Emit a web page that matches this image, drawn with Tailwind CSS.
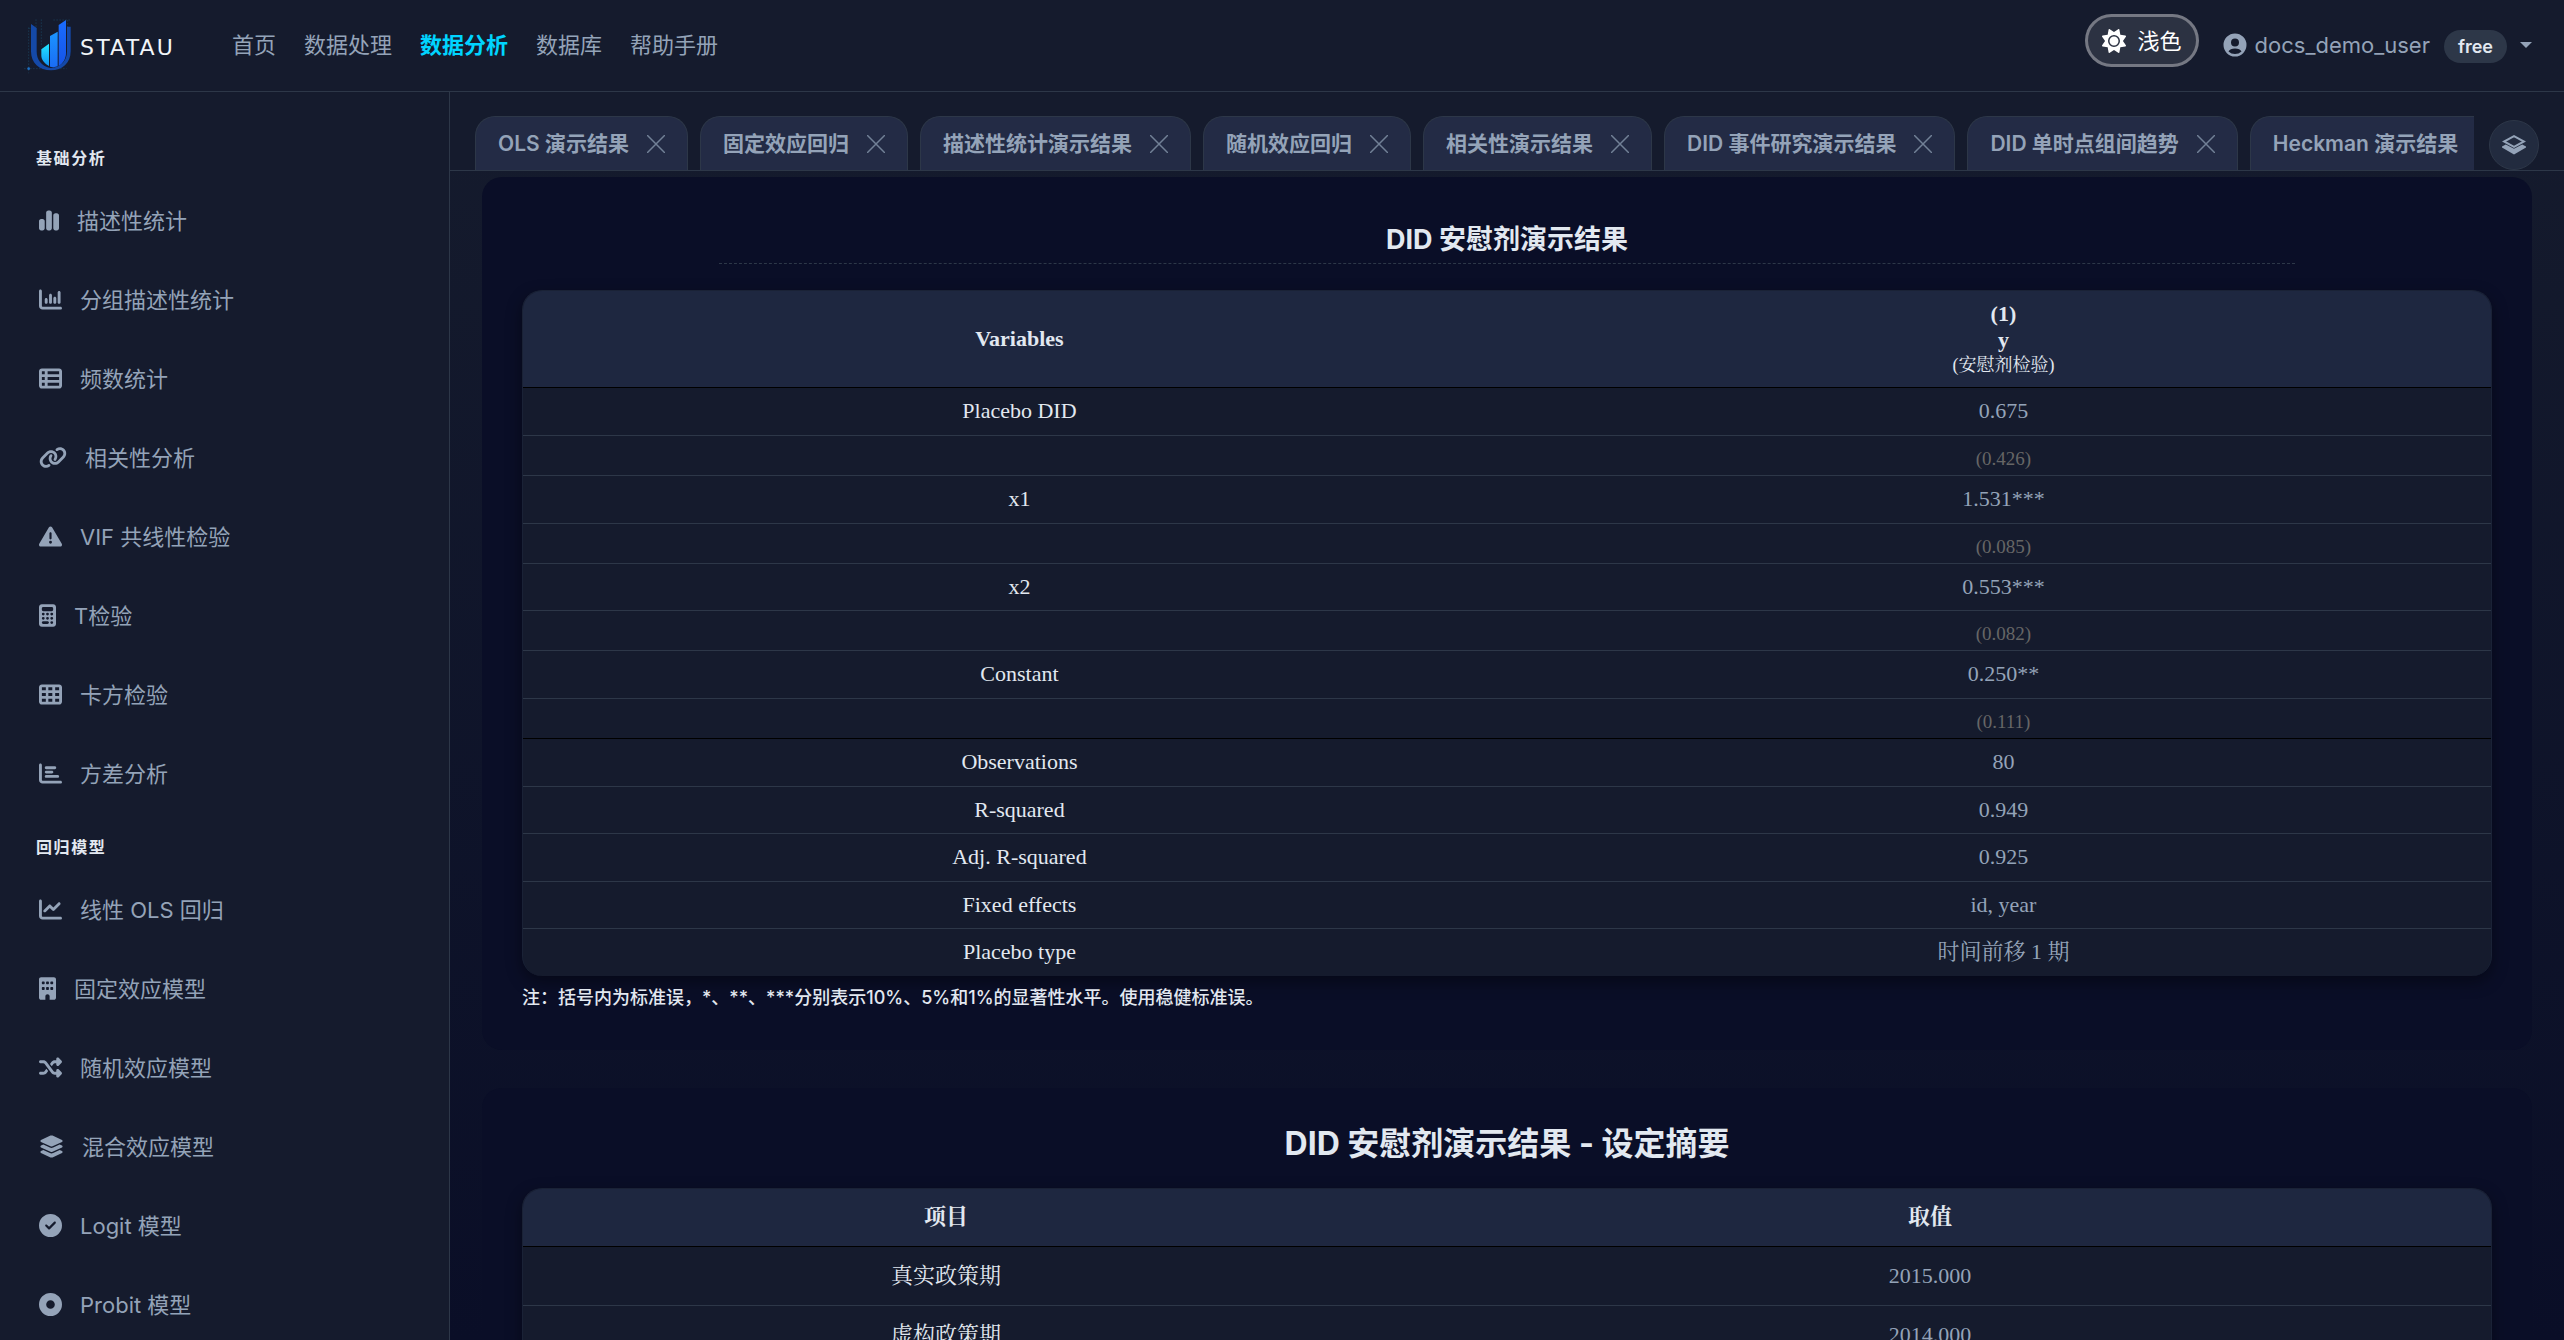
<!DOCTYPE html>
<html lang="zh-CN">
<head>
  <meta charset="UTF-8" />
  <meta name="viewport" content="width=device-width, initial-scale=1.0" />
  <title>STATAU - 数据分析</title>
  <script src="https://cdn.jsdelivr.net/npm/@tailwindcss/browser@4"></script>
</head>
<body class="h-screen overflow-hidden flex flex-col bg-[#0a0e27] text-[#94a3b8] font-[Inter,'Noto_Sans_CJK_SC',sans-serif] text-[22px] leading-[32px]">

  <!-- Header -->
  <header class="h-[92px] shrink-0 flex items-center justify-between bg-[#151b2d] border-b border-[#2d3748] pl-6 pr-8">
    <div class="flex items-center">
      <a href="#" class="flex items-center gap-2 w-[208px]" aria-label="STATAU">
        <svg class="w-12 h-14 shrink-0" viewBox="12 24 144 168" fill="none">
          <defs>
            <linearGradient id="bar1" x1="0" y1="0" x2="0" y2="1"><stop offset="0" stop-color="#22e6ff" /><stop offset="1" stop-color="#1293f5" /></linearGradient>
            <linearGradient id="bar2" x1="0" y1="0" x2="0" y2="1"><stop offset="0" stop-color="#1b95ff" /><stop offset="1" stop-color="#1a6cf5" /></linearGradient>
            <linearGradient id="bar3" x1="0" y1="0" x2="0" y2="1"><stop offset="0" stop-color="#1a6dff" /><stop offset="1" stop-color="#1554e6" /></linearGradient>
          </defs>
          <path d="M26 52V190M12 176H140M48 28V60M64 28V110M26 55H50M100 30H150M143 30V60" stroke="#1f5a7c" stroke-opacity=".6" stroke-width="2" stroke-dasharray="5 4" />
          <path d="M33 42 50 54V124C50 150 64 168 90 174C124 174 141 152 141 124V50H152V124C152 160 126 181 93 181C58 181 33 160 33 124Z" fill="#1449a8" />
          <path d="M64 118 87 101V168C73 161 65 150 64 138Z" fill="url(#bar1)" />
          <path d="M90 78 113 65V169C106 172 97 172 90 170Z" fill="url(#bar2)" />
          <path d="M116 45 138 30V128C138 146 129 160 116 168Z" fill="url(#bar3)" />
          <circle cx="26" cy="176" r="4" fill="#1d6fc4" />
        </svg>
        <span class="font-['DejaVu_Sans',sans-serif] text-[22px] leading-[24px] tracking-widest text-slate-100 mt-1">STATAU</span>
      </a>
      <nav class="flex items-center gap-7 pb-[2px]">
        <a href="#">首页</a>
        <a href="#">数据处理</a>
        <a href="#" class="font-semibold text-[#00d4ff]" aria-current="page">数据分析</a>
        <a href="#">数据库</a>
        <a href="#">帮助手册</a>
      </nav>
    </div>
    <div class="flex items-center">
      <button type="button" class="flex items-center gap-3 h-[53px] px-[14px] mb-[10px] rounded-full border-3 border-white/35 bg-white/10 text-white">
        <svg class="size-6" viewBox="0 0 512 512" fill="currentColor"><path d="M361.5 1.2c5 2.1 8.6 6.6 9.6 11.9L391 121l107.9 19.8c5.3 1 9.8 4.6 11.9 9.6s1.5 10.7-1.6 15.2L446.9 256l62.3 90.3c3.1 4.5 3.7 10.2 1.6 15.2s-6.6 8.6-11.9 9.6L391 391 371.1 498.9c-1 5.3-4.6 9.8-9.6 11.9s-10.7 1.5-15.2-1.6L256 446.9l-90.3 62.3c-4.5 3.1-10.2 3.7-15.2 1.6s-8.6-6.6-9.6-11.9L121 391 13.1 371.1c-5.3-1-9.8-4.6-11.9-9.6s-1.5-10.7 1.6-15.2L65.1 256 2.8 165.7c-3.1-4.5-3.7-10.2-1.6-15.2s6.6-8.6 11.9-9.6L121 121 140.9 13.1c1-5.3 4.6-9.8 9.6-11.9s10.7-1.5 15.2 1.6L256 65.1 346.3 2.8c4.5-3.1 10.2-3.7 15.2-1.6zM160 256a96 96 0 1 1 192 0 96 96 0 1 1 -192 0zm224 0a128 128 0 1 0 -256 0 128 128 0 1 0 256 0z" /></svg>
        浅色
      </button>
      <button type="button" class="flex items-center ml-6 pb-[2px]">
        <svg class="size-6 mr-2" viewBox="0 0 24 24" fill="currentColor" fill-rule="evenodd"><path d="M12 .5a11.500 11.500 0 1 0 0 23 11.500 11.500 0 0 0 0-23zM12 5.500a4 4 0 1 1 0 8 4 4 0 0 1 0-8zM12 15.500c3.200 0 5.600 1.200 6.500 3a9.500 9.500 0 0 1-13 0c.9-1.800 3.300-3 6.500-3z" /></svg>
        <span>docs_demo_user</span>
        <span class="flex items-center h-[33px] px-[14px] ml-[14px] mt-1 rounded-full bg-[#2d3748] text-[18px] font-semibold text-slate-200">free</span>
        <svg class="w-3 h-[6px] ml-[13px]" viewBox="0 0 12 6" fill="currentColor"><path d="M0 0h12L6 6z" /></svg>
      </button>
    </div>
  </header>

  <div class="flex flex-1 min-h-0">

    <!-- Sidebar -->
    <aside class="w-[450px] shrink-0 overflow-hidden bg-[#151b2d] border-r border-[#2d3748]">
      <h2 class="pl-9 pt-[54px] mb-[11px] text-[16px] leading-[24px] font-bold tracking-widest text-slate-200">基础分析</h2>
      <ul class="pl-[39px]">
        <li><a href="#" class="flex items-center gap-[18px] h-[79px]">
          <svg class="w-5 h-[23px]" viewBox="0 0 448 512" fill="currentColor"><path d="M160 80c0-26.500 21.500-48 48-48h32c26.500 0 48 21.500 48 48V432c0 26.500-21.500 48-48 48H208c-26.500 0-48-21.500-48-48V80zM0 272c0-26.500 21.500-48 48-48H80c26.500 0 48 21.500 48 48V432c0 26.500-21.500 48-48 48H48c-26.500 0-48-21.500-48-48V272zM368 96h32c26.500 0 48 21.500 48 48V432c0 26.500-21.500 48-48 48H368c-26.500 0-48-21.500-48-48V144c0-26.500 21.500-48 48-48z" /></svg>
          描述性统计
        </a></li>
        <li><a href="#" class="flex items-center gap-[18px] h-[79px]">
          <svg class="size-[23px]" viewBox="0 0 512 512" fill="currentColor"><path d="M32 32c17.700 0 32 14.300 32 32V400c0 8.800 7.200 16 16 16H480c17.700 0 32 14.300 32 32s-14.300 32-32 32H80c-44.200 0-80-35.800-80-80V64C0 46.300 14.300 32 32 32zM160 224c17.700 0 32 14.300 32 32v64c0 17.700-14.300 32-32 32s-32-14.300-32-32V256c0-17.700 14.300-32 32-32zm128-64V320c0 17.700-14.300 32-32 32s-32-14.300-32-32V160c0-17.700 14.300-32 32-32s32 14.300 32 32zm64 32c17.700 0 32 14.300 32 32v96c0 17.700-14.300 32-32 32s-32-14.300-32-32V224c0-17.700 14.300-32 32-32zM480 96V320c0 17.700-14.300 32-32 32s-32-14.300-32-32V96c0-17.700 14.300-32 32-32s32 14.300 32 32z" /></svg>
          分组描述性统计
        </a></li>
        <li><a href="#" class="flex items-center gap-[18px] h-[79px]">
          <svg class="size-[23px]" viewBox="0 0 512 512" fill="currentColor" fill-rule="evenodd"><path d="M0 96C0 60.700 28.700 32 64 32H448c35.300 0 64 28.700 64 64V416c0 35.300-28.700 64-64 64H64c-35.300 0-64-28.700-64-64V96zm64 0v64h64V96H64zm384 0H192v64H448V96zM64 224v64h64V224H64zm384 0H192v64H448V224zM64 352v64h64V352H64zm384 0H192v64H448V352z" /></svg>
          频数统计
        </a></li>
        <li><a href="#" class="flex items-center gap-[18px] h-[79px]">
          <svg class="w-7 h-[23px]" viewBox="0 0 640 512" fill="currentColor"><path d="M579.8 267.7c56.5-56.5 56.5-148 0-204.5c-50-50-128.8-56.5-186.3-15.4l-1.6 1.1c-14.4 10.3-17.7 30.3-7.4 44.6s30.3 17.7 44.6 7.4l1.6-1.1c32.1-22.9 76-19.3 103.8 8.6c31.5 31.5 31.5 82.5 0 114L422.3 334.8c-31.5 31.5-82.5 31.5-114 0c-27.9-27.9-31.5-71.8-8.6-103.8l1.1-1.6c10.3-14.4 6.9-34.4-7.4-44.6s-34.4-6.9-44.6 7.4l-1.1 1.6C206.5 251.2 213 330 263 380c56.5 56.5 148 56.5 204.5 0L579.8 267.7zM60.2 244.3c-56.5 56.5-56.5 148 0 204.5c50 50 128.8 56.5 186.3 15.4l1.6-1.1c14.4-10.3 17.7-30.3 7.4-44.6s-30.3-17.7-44.6-7.4l-1.6 1.1c-32.1 22.9-76 19.3-103.8-8.6C74 372 74 321 105.5 289.5L217.7 177.2c31.5-31.5 82.5-31.5 114 0c27.9 27.9 31.5 71.8 8.6 103.9l-1.1 1.6c-10.3 14.4-6.9 34.4 7.4 44.6s34.4 6.9 44.6-7.4l1.1-1.6C433.5 260.8 427 182 377 132c-56.5-56.5-148-56.5-204.5 0L60.2 244.3z" /></svg>
          相关性分析
        </a></li>
        <li><a href="#" class="flex items-center gap-[18px] h-[79px]">
          <svg class="size-[23px]" viewBox="0 0 512 512" fill="currentColor"><path d="M256 32c14.2 0 27.3 7.5 34.5 19.8l216 368c7.3 12.4 7.3 27.7 .2 40.1S486.3 480 472 480H40c-14.3 0-27.6-7.7-34.7-20.1s-7-27.8 .2-40.1l216-368C228.7 39.5 241.8 32 256 32zm0 128c-13.3 0-24 10.7-24 24V296c0 13.3 10.7 24 24 24s24-10.7 24-24V184c0-13.3-10.7-24-24-24zm32 224a32 32 0 1 0 -64 0 32 32 0 1 0 64 0z" /></svg>
          VIF 共线性检验
        </a></li>
        <li><a href="#" class="flex items-center gap-[18px] h-[79px]">
          <svg class="w-[17px] h-[23px]" viewBox="0 0 384 512" fill="currentColor"><path d="M64 0C28.7 0 0 28.7 0 64V448c0 35.3 28.7 64 64 64H320c35.3 0 64-28.7 64-64V64c0-35.3-28.7-64-64-64H64zM96 64H288c17.7 0 32 14.3 32 32v32c0 17.7-14.3 32-32 32H96c-17.7 0-32-14.3-32-32V96c0-17.7 14.3-32 32-32zm32 160a32 32 0 1 1 -64 0 32 32 0 1 1 64 0zM96 352a32 32 0 1 1 0-64 32 32 0 1 1 0 64zM64 416c0-17.7 14.3-32 32-32h96c17.7 0 32 14.3 32 32s-14.3 32-32 32H96c-17.7 0-32-14.3-32-32zM192 256a32 32 0 1 1 0-64 32 32 0 1 1 0 64zm32 64a32 32 0 1 1 -64 0 32 32 0 1 1 64 0zm64-64a32 32 0 1 1 0-64 32 32 0 1 1 0 64zm32 64a32 32 0 1 1 -64 0 32 32 0 1 1 64 0zM288 448a32 32 0 1 1 0-64 32 32 0 1 1 0 64z" fill-rule="evenodd" /></svg>
          T检验
        </a></li>
        <li><a href="#" class="flex items-center gap-[18px] h-[79px]">
          <svg class="size-[23px]" viewBox="0 0 512 512" fill="currentColor" fill-rule="evenodd"><path d="M64 32C28.7 32 0 60.7 0 96V416c0 35.3 28.7 64 64 64H448c35.3 0 64-28.7 64-64V96c0-35.3-28.7-64-64-64H64zm88 64v64H64V96h88zm56 0h88v64H208V96zm240 0v64H360V96h88zM64 224h88v64H64V224zm232 0v64H208V224h88zm64 0h88v64H360V224zM152 352v64H64V352h88zm56 0h88v64H208V352zm240 0v64H360V352h88z" /></svg>
          卡方检验
        </a></li>
        <li><a href="#" class="flex items-center gap-[18px] h-[79px]">
          <svg class="size-[23px]" viewBox="0 0 512 512" fill="currentColor"><path d="M32 32c17.7 0 32 14.3 32 32V400c0 8.8 7.2 16 16 16H480c17.7 0 32 14.3 32 32s-14.3 32-32 32H80c-44.2 0-80-35.8-80-80V64C0 46.3 14.3 32 32 32zm96 96c0-17.7 14.3-32 32-32H352c17.7 0 32 14.3 32 32s-14.3 32-32 32H160c-17.7 0-32-14.3-32-32zm32 64H288c17.7 0 32 14.3 32 32s-14.3 32-32 32H160c-17.7 0-32-14.3-32-32s14.3-32 32-32zm0 96H416c17.7 0 32 14.3 32 32s-14.3 32-32 32H160c-17.7 0-32-14.3-32-32s14.3-32 32-32z" /></svg>
          方差分析
        </a></li>
      </ul>

      <h2 class="pl-9 pt-[22px] mb-[11px] text-[16px] leading-[24px] font-bold tracking-widest text-slate-200">回归模型</h2>
      <ul class="pl-[39px]">
        <li><a href="#" class="flex items-center gap-[18px] h-[79px]">
          <svg class="size-[23px]" viewBox="0 0 512 512" fill="currentColor"><path d="M64 64c0-17.7-14.3-32-32-32S0 46.3 0 64V400c0 44.2 35.8 80 80 80H480c17.7 0 32-14.3 32-32s-14.3-32-32-32H80c-8.8 0-16-7.2-16-16V64zm406.6 86.6c12.5-12.5 12.5-32.8 0-45.3s-32.8-12.5-45.3 0L320 210.7l-57.4-57.4c-12.5-12.5-32.8-12.5-45.3 0l-112 112c-12.5 12.5-12.5 32.8 0 45.3s32.8 12.5 45.3 0L240 221.3l57.4 57.4c12.5 12.5 32.8 12.5 45.3 0l128-128z" /></svg>
          线性 OLS 回归
        </a></li>
        <li><a href="#" class="flex items-center gap-[18px] h-[79px]">
          <svg class="w-[17px] h-[23px]" viewBox="0 0 384 512" fill="currentColor" fill-rule="evenodd"><path d="M48 0C21.5 0 0 21.5 0 48V464c0 26.5 21.5 48 48 48h96V432c0-26.5 21.5-48 48-48s48 21.5 48 48v80h96c26.5 0 48-21.5 48-48V48c0-26.5-21.5-48-48-48H48zM64 240c0-8.8 7.2-16 16-16h32c8.8 0 16 7.2 16 16v32c0 8.8-7.2 16-16 16H80c-8.8 0-16-7.2-16-16V240zm112-16h32c8.8 0 16 7.2 16 16v32c0 8.8-7.2 16-16 16H176c-8.8 0-16-7.2-16-16V240c0-8.8 7.2-16 16-16zm80 16c0-8.8 7.2-16 16-16h32c8.8 0 16 7.2 16 16v32c0 8.8-7.2 16-16 16H272c-8.8 0-16-7.2-16-16V240zM80 96h32c8.8 0 16 7.2 16 16v32c0 8.8-7.2 16-16 16H80c-8.8 0-16-7.2-16-16V112c0-8.8 7.2-16 16-16zm80 16c0-8.8 7.2-16 16-16h32c8.8 0 16 7.2 16 16v32c0 8.8-7.2 16-16 16H176c-8.8 0-16-7.2-16-16V112zM272 96h32c8.8 0 16 7.2 16 16v32c0 8.8-7.2 16-16 16H272c-8.8 0-16-7.2-16-16V112c0-8.8 7.2-16 16-16z" /></svg>
          固定效应模型
        </a></li>
        <li><a href="#" class="flex items-center gap-[18px] h-[79px]">
          <svg class="size-[23px]" viewBox="0 0 512 512" fill="currentColor"><path d="M403.8 34.4c12-5 25.7-2.2 34.9 6.9l64 64c6 6 9.4 14.1 9.4 22.6s-3.4 16.6-9.4 22.6l-64 64c-9.2 9.2-22.9 11.9-34.9 6.9s-19.8-16.6-19.8-29.6V160H352c-10.1 0-19.6 4.7-25.6 12.8L284 229.3 244 176l31.2-41.6C293.3 110.2 321.8 96 352 96h32V64c0-12.9 7.8-24.6 19.8-29.6zM164 282.7L204 336l-31.2 41.6C154.7 401.8 126.2 416 96 416H32c-17.7 0-32-14.3-32-32s14.3-32 32-32H96c10.1 0 19.6-4.7 25.6-12.8L164 282.7zm274.6 188c-9.2 9.2-22.9 11.9-34.9 6.9s-19.8-16.6-19.8-29.6V416H352c-30.2 0-58.7-14.2-76.8-38.4L121.6 172.8c-6-8.1-15.5-12.8-25.6-12.8H32c-17.7 0-32-14.3-32-32s14.3-32 32-32H96c30.2 0 58.7 14.2 76.8 38.4L326.4 339.2c6 8.1 15.5 12.8 25.6 12.8h32V320c0-12.9 7.8-24.6 19.8-29.6s25.7-2.2 34.9 6.9l64 64c6 6 9.4 14.1 9.4 22.6s-3.4 16.6-9.4 22.6l-64 64z" /></svg>
          随机效应模型
        </a></li>
        <li><a href="#" class="flex items-center gap-[18px] h-[79px]">
          <svg class="w-[25px] h-[23px]" viewBox="0 0 576 512" fill="currentColor"><path d="M264.5 5.2c14.900-6.900 32.100-6.900 47 0l218.600 101c8.500 3.900 13.900 12.400 13.900 21.800s-5.400 17.900-13.900 21.800l-218.600 101c-14.900 6.900-32.100 6.900-47 0L45.900 149.800C37.400 145.800 32 137.300 32 128s5.400-17.900 13.900-21.800L264.500 5.200zM476.900 209.600l53.200 24.600c8.500 3.900 13.900 12.400 13.900 21.800s-5.400 17.900-13.900 21.800l-218.600 101c-14.900 6.900-32.100 6.900-47 0L45.900 277.800C37.400 273.800 32 265.300 32 256s5.400-17.900 13.900-21.800l53.200-24.600 152 70.200c23.400 10.800 50.400 10.800 73.800 0l152-70.200zm-152 198.200l152-70.200 53.200 24.600c8.500 3.900 13.900 12.400 13.900 21.800s-5.400 17.900-13.900 21.800l-218.600 101c-14.900 6.900-32.100 6.900-47 0L45.900 405.800C37.400 401.800 32 393.300 32 384s5.400-17.900 13.900-21.800l53.200-24.600 152 70.200c23.400 10.800 50.400 10.800 73.800 0z" /></svg>
          混合效应模型
        </a></li>
        <li><a href="#" class="flex items-center gap-[18px] h-[79px]">
          <svg class="size-[23px]" viewBox="0 0 512 512" fill="currentColor" fill-rule="evenodd"><path d="M256 512A256 256 0 1 0 256 0a256 256 0 1 0 0 512zM369 209L241 337c-9.4 9.4-24.6 9.4-33.9 0l-64-64c-9.4-9.4-9.4-24.6 0-33.9s24.6-9.4 33.9 0l47 47L335 175c9.4-9.4 24.6-9.4 33.9 0s9.4 24.6 0 33.9z" /></svg>
          Logit 模型
        </a></li>
        <li><a href="#" class="flex items-center gap-[18px] h-[79px]">
          <svg class="size-[23px]" viewBox="0 0 512 512" fill="currentColor" fill-rule="evenodd"><path d="M256 0a256 256 0 1 0 0 512 256 256 0 1 0 0-512zm0 160a96 96 0 1 1 0 192 96 96 0 1 1 0-192z" /></svg>
          Probit 模型
        </a></li>
      </ul>
    </aside>

    <main class="flex-1 min-w-0 flex flex-col bg-linear-to-b from-[#151b2d] to-[#0a0e27]">

      <!-- Result tabs -->
      <div class="h-[79px] shrink-0 flex items-end border-b border-[#2d3748] bg-[#151b2d] pl-[25px] pr-[25px] text-[21px] font-semibold">
        <div class="flex flex-1 min-w-0 gap-3 overflow-hidden whitespace-nowrap">
          <div class="flex shrink-0 items-center gap-[18px] h-[54px] px-[22px] rounded-t-[20px] border border-b-0 border-[#2d3748] bg-[#232b45]">
            <a href="#">OLS 演示结果</a>
            <button type="button" aria-label="关闭"><svg class="size-[18px]" viewBox="0 0 18 18" stroke="#718096" stroke-width="1.500"><path d="M0 0 18 18M18 0 0 18" /></svg></button>
          </div>
          <div class="flex shrink-0 items-center gap-[18px] h-[54px] px-[22px] rounded-t-[20px] border border-b-0 border-[#2d3748] bg-[#232b45]">
            <a href="#">固定效应回归</a>
            <button type="button" aria-label="关闭"><svg class="size-[18px]" viewBox="0 0 18 18" stroke="#718096" stroke-width="1.500"><path d="M0 0 18 18M18 0 0 18" /></svg></button>
          </div>
          <div class="flex shrink-0 items-center gap-[18px] h-[54px] px-[22px] rounded-t-[20px] border border-b-0 border-[#2d3748] bg-[#232b45]">
            <a href="#">描述性统计演示结果</a>
            <button type="button" aria-label="关闭"><svg class="size-[18px]" viewBox="0 0 18 18" stroke="#718096" stroke-width="1.500"><path d="M0 0 18 18M18 0 0 18" /></svg></button>
          </div>
          <div class="flex shrink-0 items-center gap-[18px] h-[54px] px-[22px] rounded-t-[20px] border border-b-0 border-[#2d3748] bg-[#232b45]">
            <a href="#">随机效应回归</a>
            <button type="button" aria-label="关闭"><svg class="size-[18px]" viewBox="0 0 18 18" stroke="#718096" stroke-width="1.500"><path d="M0 0 18 18M18 0 0 18" /></svg></button>
          </div>
          <div class="flex shrink-0 items-center gap-[18px] h-[54px] px-[22px] rounded-t-[20px] border border-b-0 border-[#2d3748] bg-[#232b45]">
            <a href="#">相关性演示结果</a>
            <button type="button" aria-label="关闭"><svg class="size-[18px]" viewBox="0 0 18 18" stroke="#718096" stroke-width="1.500"><path d="M0 0 18 18M18 0 0 18" /></svg></button>
          </div>
          <div class="flex shrink-0 items-center gap-[18px] h-[54px] px-[22px] rounded-t-[20px] border border-b-0 border-[#2d3748] bg-[#232b45]">
            <a href="#">DID 事件研究演示结果</a>
            <button type="button" aria-label="关闭"><svg class="size-[18px]" viewBox="0 0 18 18" stroke="#718096" stroke-width="1.500"><path d="M0 0 18 18M18 0 0 18" /></svg></button>
          </div>
          <div class="flex shrink-0 items-center gap-[18px] h-[54px] px-[22px] rounded-t-[20px] border border-b-0 border-[#2d3748] bg-[#232b45]">
            <a href="#">DID 单时点组间趋势</a>
            <button type="button" aria-label="关闭"><svg class="size-[18px]" viewBox="0 0 18 18" stroke="#718096" stroke-width="1.500"><path d="M0 0 18 18M18 0 0 18" /></svg></button>
          </div>
          <div class="flex shrink-0 items-center gap-[18px] h-[54px] px-[22px] rounded-t-[20px] border border-b-0 border-[#2d3748] bg-[#232b45]">
            <a href="#">Heckman 演示结果</a>
            <button type="button" aria-label="关闭"><svg class="size-[18px]" viewBox="0 0 18 18" stroke="#718096" stroke-width="1.500"><path d="M0 0 18 18M18 0 0 18" /></svg></button>
          </div>
        </div>
        <button type="button" class="flex shrink-0 items-center justify-center size-[50px] ml-[15px] rounded-full border border-[#2d3748] bg-[#222b3f]" aria-label="全部结果">
          <svg class="w-6 h-5" viewBox="0 0 24 20" fill="currentColor"><path d="M12 1.200 22 6.500 12 11.800 2 6.500Z" fill="none" stroke="currentColor" stroke-width="2" /><path d="M0 11.500 3.800 9.500 12 13.800 20.200 9.500 24 11.500V12.500L12 19.500 0 12.500Z" /></svg>
        </button>
      </div>

      <div class="flex-1 min-h-0 overflow-hidden px-8 pt-[6px] text-slate-200">

        <section class="px-10 pt-[46px] pb-10 rounded-[20px] bg-[#0a0e27]">
          <h1 class="w-4/5 mx-auto pb-[6px] mb-[26px] border-b border-dashed border-[#2d3748] text-center text-[27px] leading-[34px] font-bold">DID 安慰剂演示结果</h1>

          <div class="overflow-hidden rounded-[20px] border border-b-0 border-[#1a2236] bg-[#151b2d] shadow-[0_6px_16px_rgba(0,0,0,0.4)]">
            <table class="w-full border-collapse text-center font-['Liberation_Serif','Noto_Serif_CJK_SC',serif] text-[22px] leading-[26px]">
              <thead class="bg-[#1e2740]">
                <tr class="h-24 border-b border-black">
                  <th class="font-bold" scope="col">Variables</th>
                  <th class="font-bold" scope="col">(1)<br />y<br /><span class="block text-[18px] leading-[24px] font-normal">(安慰剂检验)</span></th>
                </tr>
              </thead>
              <tbody>
                <tr class="h-12 border-b border-[#2d3748]"><td>Placebo DID</td><td class="text-[#94a3b8]">0.675</td></tr>
                <tr class="h-10 border-b border-[#2d3748]"><td></td><td class="pt-2 text-[19px] leading-[20px] text-[#666666]">(0.426)</td></tr>
                <tr class="h-12 border-b border-[#2d3748]"><td>x1</td><td class="text-[#94a3b8]">1.531***</td></tr>
                <tr class="h-10 border-b border-[#2d3748]"><td></td><td class="pt-2 text-[19px] leading-[20px] text-[#666666]">(0.085)</td></tr>
                <tr class="h-[47px] border-b border-[#2d3748]"><td>x2</td><td class="text-[#94a3b8]">0.553***</td></tr>
                <tr class="h-10 border-b border-[#2d3748]"><td></td><td class="pt-2 text-[19px] leading-[20px] text-[#666666]">(0.082)</td></tr>
                <tr class="h-12 border-b border-[#2d3748]"><td>Constant</td><td class="text-[#94a3b8]">0.250**</td></tr>
                <tr class="h-10 border-b border-black"><td></td><td class="pt-2 text-[19px] leading-[20px] text-[#666666]">(0.111)</td></tr>
                <tr class="h-12 border-b border-[#2d3748]"><td>Observations</td><td class="text-[#94a3b8]">80</td></tr>
                <tr class="h-[47px] border-b border-[#2d3748]"><td>R-squared</td><td class="text-[#94a3b8]">0.949</td></tr>
                <tr class="h-12 border-b border-[#2d3748]"><td>Adj. R-squared</td><td class="text-[#94a3b8]">0.925</td></tr>
                <tr class="h-[47px] border-b border-[#2d3748]"><td>Fixed effects</td><td class="text-[#94a3b8]">id, year</td></tr>
                <tr class="h-12"><td>Placebo type</td><td class="text-[#94a3b8]">时间前移 1 期</td></tr>
              </tbody>
            </table>
          </div>
          <p class="mt-[10px] text-[18px] leading-[24px] font-medium">注：括号内为标准误，*、**、***分别表示10%、5%和1%的显著性水平。使用稳健标准误。</p>
        </section>

        <section class="mt-[38px] px-10 pt-9 pb-10 rounded-[20px] bg-[#0a0e27]">
          <h2 class="mb-6 text-center text-[32px] leading-[40px] font-bold">DID 安慰剂演示结果 - 设定摘要</h2>

          <div class="overflow-hidden rounded-[20px] border border-b-0 border-[#1a2236] bg-[#151b2d] shadow-[0_6px_16px_rgba(0,0,0,0.4)]">
            <table class="w-full table-fixed border-collapse text-center font-['Liberation_Serif','Noto_Serif_CJK_SC',serif] text-[22px] leading-[26px]">
              <thead class="bg-[#1e2740]">
                <tr class="h-[57px] border-b border-black">
                  <th class="w-[43%] font-bold" scope="col">项目</th>
                  <th class="font-bold" scope="col">取值</th>
                </tr>
              </thead>
              <tbody>
                <tr class="h-[59px] border-b border-[#2d3748]"><td>真实政策期</td><td class="text-[#94a3b8]">2015.000</td></tr>
                <tr class="h-[59px] border-b border-[#2d3748]"><td>虚构政策期</td><td class="text-[#94a3b8]">2014.000</td></tr>
              </tbody>
            </table>
          </div>
        </section>

      </div>
    </main>
  </div>

</body>
</html>
